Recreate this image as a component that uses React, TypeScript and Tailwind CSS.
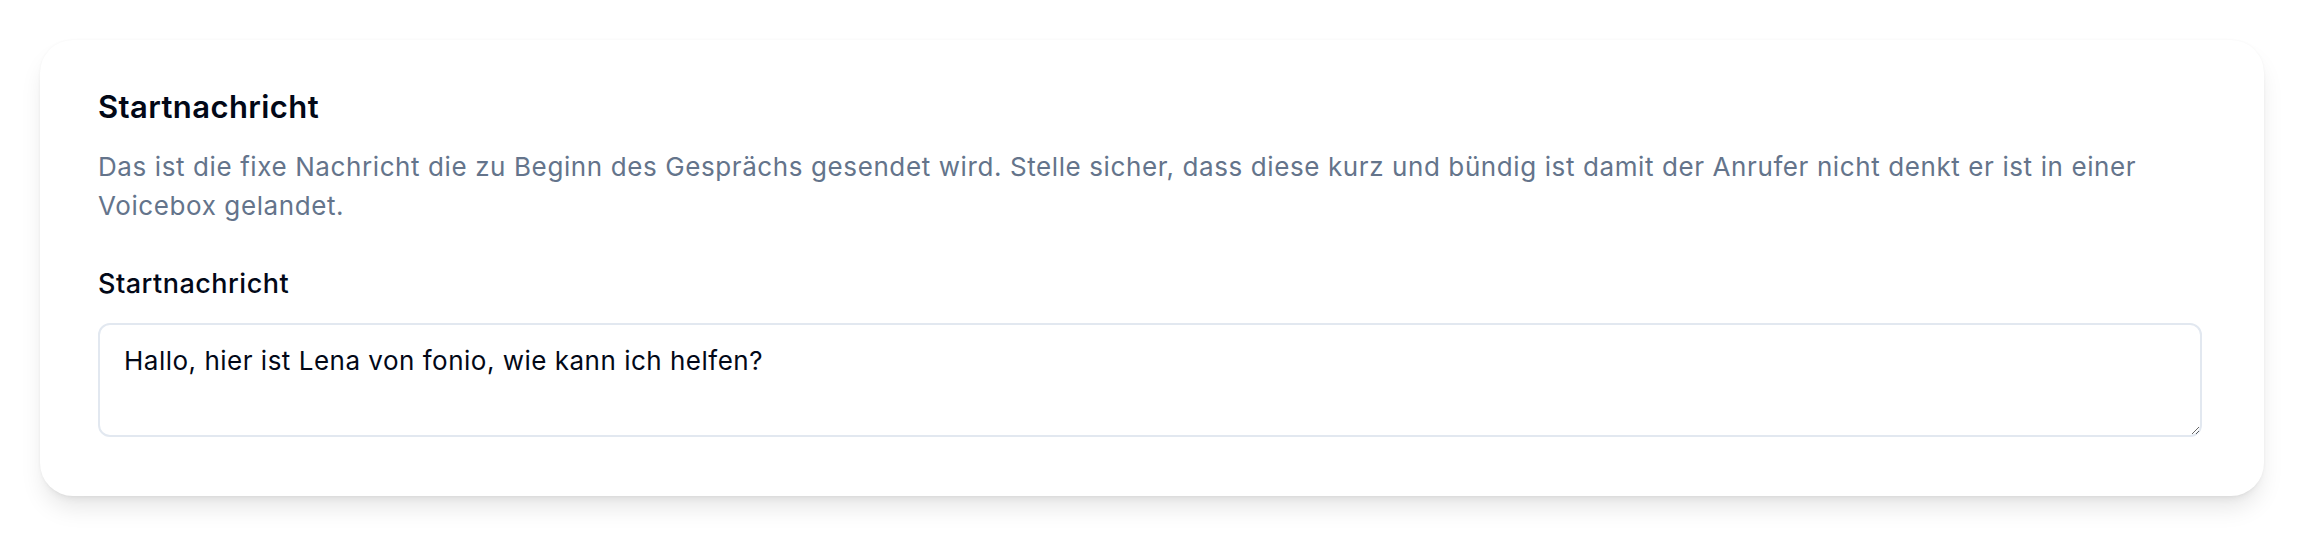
import React, { useState } from 'react';

function StartMessageCard() {
    const [message, setMessage] = useState('Hallo, hier ist Lena von fonio, wie kann ich helfen?');

    return (
        <div className="rounded-[33px] bg-white pt-[44px] pb-[59px] pl-[58px] pr-[62px] shadow-[0_15px_24px_-4px_rgba(0,0,0,0.10),0_6px_10px_-6px_rgba(0,0,0,0.10),0_0_3px_rgba(0,0,0,0.04)]">
            <h3 className="text-[31px] leading-[45px] font-semibold tracking-[0.4px] text-[#020817]">Startnachricht</h3>
            <p className="mt-[18px] text-[26px] leading-[39px] tracking-[0.6px] text-[#64748b]">
                Das ist die fixe Nachricht die zu Beginn des Gesprächs gesendet wird. Stelle sicher, dass diese kurz und bündig ist damit der Anrufer nicht denkt er ist in einer Voicebox gelandet.
            </p>

            <label htmlFor="startMessage" className="mt-[39px] block text-[27px] leading-[40px] font-medium tracking-[0.5px] text-[#020817]">
                Startnachricht
            </label>
            <textarea
                id="startMessage"
                value={message}
                onChange={(e) => setMessage(e.target.value)}
                className="mt-[19px] block h-[114px] w-full rounded-[12px] border-2 border-[#e2e8f0] bg-white px-[24px] pt-[16px] text-[26px] leading-[39px] tracking-[0.5px] text-[#020817] focus:outline-none"
            />
        </div>
    );
}

export default function App() {
    return (
        <div className="min-h-[536px] bg-white px-[40px] pt-[40px] font-['Inter',sans-serif]">
            <StartMessageCard />
        </div>
    );
}
